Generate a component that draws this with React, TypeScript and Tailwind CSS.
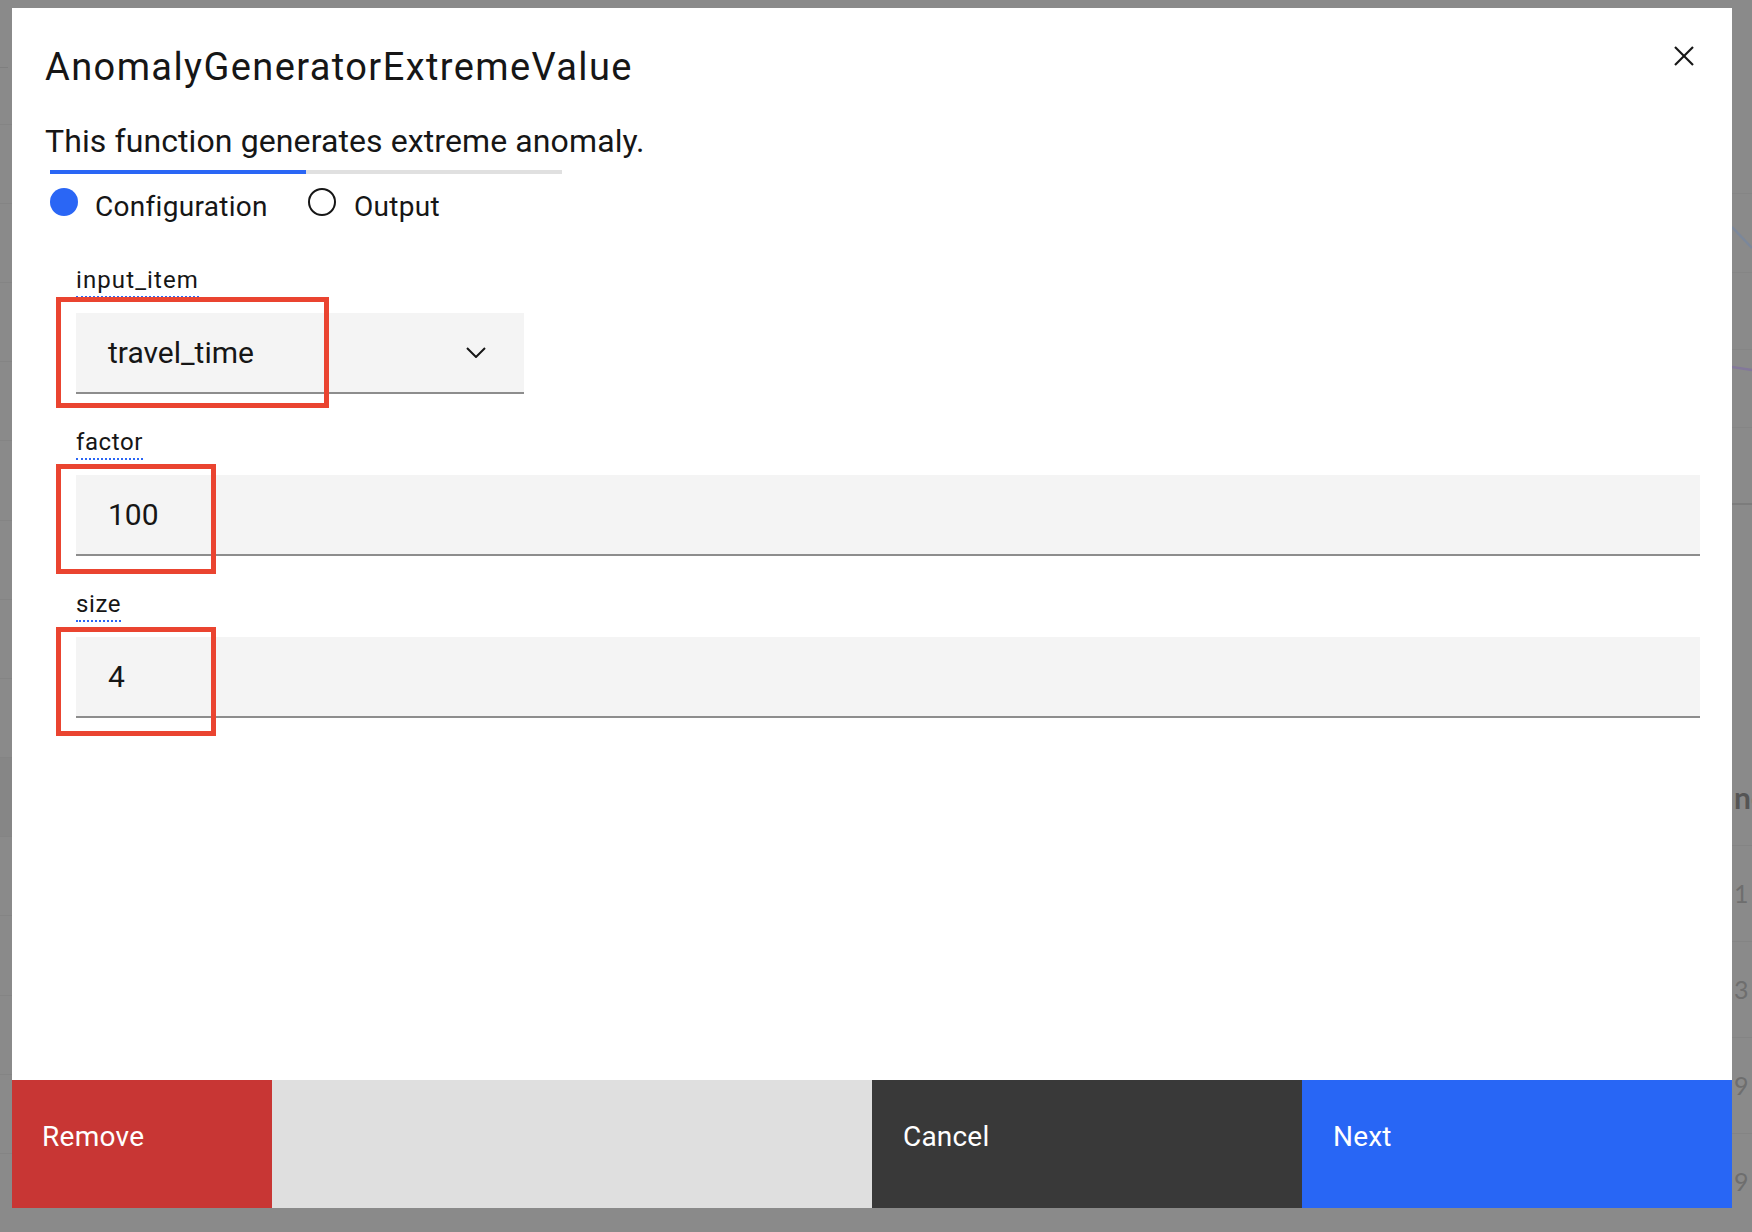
import React from "react";

function LeftStrip() {
  const rows = Array.from({ length: 14 });
  return (
    <div className="w-[12px] shrink-0 flex flex-col">
      <div className="h-[69px] border-b border-[#7f7f7f] w-[8px]" />
      <div className="h-[56px]" />
      {rows.map((_, i) => (
        <div
          key={i}
          className={
            i === 8
              ? "h-[80px] border-t border-[#848484] bg-[#868686]"
              : "h-[80px] border-t border-[#848484]"
          }
        />
      ))}
    </div>
  );
}

function RightStrip() {
  return (
    <div className="w-[20px] shrink-0 overflow-hidden flex flex-col font-['Lato',sans-serif]">
      <svg width="20" height="510" viewBox="0 0 20 510">
        <line x1="0" y1="193.5" x2="20" y2="193.5" stroke="#858585" strokeWidth="1" />
        <line x1="0" y1="272.5" x2="20" y2="272.5" stroke="#858585" strokeWidth="1" />
        <line x1="0" y1="349.5" x2="20" y2="349.5" stroke="#858585" strokeWidth="1" />
        <line x1="0" y1="427.5" x2="20" y2="427.5" stroke="#858585" strokeWidth="1" />
        <line x1="0" y1="504" x2="20" y2="504" stroke="#7c7c7c" strokeWidth="2" />
        <line x1="0" y1="227" x2="20" y2="248" stroke="#7b879a" strokeWidth="2.5" />
        <line x1="0" y1="367" x2="20" y2="370" stroke="#83789a" strokeWidth="2.5" />
      </svg>
      <div className="h-[250px]" />
      <div className="h-[85px] flex items-center pl-[2px] text-[30px] leading-[30px] font-bold text-[#555555] whitespace-nowrap -mt-[6px]">
        ne
      </div>
      <div className="h-[6px]" />
      {["1", "3", "9", "9"].map((d, i) => (
        <div
          key={i}
          className="h-[96px] border-t border-[#848484] flex items-center pl-[2px] text-[25px] leading-[25px] text-[#6e6e6e]"
        >
          {d}
        </div>
      ))}
    </div>
  );
}

function RedBox({ className }: { className: string }) {
  return (
    <div
      className={
        "absolute border-[5px] border-[#ea4430] pointer-events-none " + className
      }
    />
  );
}

function FieldLabel({
  children,
  wide,
}: {
  children: React.ReactNode;
  wide?: boolean;
}) {
  return (
    <div
      className={
        wide
          ? "self-start text-[24px] leading-[32px] tracking-[1.1px] text-[#161616] border-b-2 border-dotted border-[#2a66f5]"
          : "self-start text-[24px] leading-[32px] tracking-[0.6px] text-[#161616] border-b-2 border-dotted border-[#2a66f5]"
      }
    >
      {children}
    </div>
  );
}

export default function App() {
  return (
    <div className="w-[1752px] h-[1232px] bg-[#8a8a8a] flex overflow-hidden font-['Roboto',sans-serif]">
      <LeftStrip />
      <div className="w-[1720px] shrink-0 pt-[8px]">
        <div className="h-[1200px] bg-white flex flex-col">
          {/* header */}
          <div className="flex items-start justify-between pt-[36px] pl-[33px] pr-[38px]">
            <h1 className="text-[38px] leading-[46px] text-[#161616] font-normal tracking-[1.4px]">
              AnomalyGeneratorExtremeValue
            </h1>
            <button className="w-[20px] h-[20px] mt-[2px]" aria-label="close">
              <svg width="20" height="20" viewBox="0 0 20 20">
                <line x1="1" y1="1" x2="19" y2="19" stroke="#161616" strokeWidth="2.2" />
                <line x1="19" y1="1" x2="1" y2="19" stroke="#161616" strokeWidth="2.2" />
              </svg>
            </button>
          </div>

          <div className="pl-[33px] flex flex-col">
            <p className="mt-[31px] text-[32px] leading-[40px] tracking-[0.1px] text-[#161616]">
              This function generates extreme anomaly.
            </p>

            {/* progress */}
            <div className="mt-[9px] ml-[5px] w-[512px] h-[4px] bg-[#e0e0e0] flex">
              <div className="w-[256px] h-[4px] bg-[#2a66f5]" />
            </div>

            {/* radios */}
            <div className="mt-[12px] ml-[5px] flex items-start">
              <div className="w-[258px] flex items-start">
                <div className="mt-[2px] w-[28px] h-[28px] rounded-full bg-[#2a66f5]" />
                <span className="ml-[17px] mt-[5px] text-[28px] leading-[32px] tracking-[0.3px] text-[#161616]">
                  Configuration
                </span>
              </div>
              <div className="flex items-start">
                <div className="mt-[2px] w-[28px] h-[28px] rounded-full border-2 border-[#161616]" />
                <span className="ml-[18px] mt-[5px] text-[28px] leading-[32px] tracking-[0.3px] text-[#161616]">
                  Output
                </span>
              </div>
            </div>
          </div>

          {/* form */}
          <div className="mt-[41px] pl-[64px] pr-[32px] flex flex-col gap-[32px]">
            <div className="flex flex-col">
              <FieldLabel wide>input_item</FieldLabel>
              <div className="relative mt-[15px] w-[448px] h-[81px] bg-[#f4f4f4] border-b-2 border-[#8d8d8d] flex items-center justify-between pl-[32px] pr-[38px]">
                <span className="text-[30px] leading-[36px] text-[#161616]">travel_time</span>
                <svg width="20" height="11" viewBox="0 0 20 11">
                  <polyline points="1,1 10,10 19,1" fill="none" stroke="#161616" strokeWidth="2" />
                </svg>
                <RedBox className="left-[-20px] top-[-16px] w-[273px] h-[111px]" />
              </div>
            </div>

            <div className="flex flex-col">
              <FieldLabel>factor</FieldLabel>
              <div className="relative mt-[15px] h-[81px] bg-[#f4f4f4] border-b-2 border-[#8d8d8d] flex items-center pl-[32px]">
                <span className="text-[30px] leading-[36px] text-[#161616]">100</span>
                <RedBox className="left-[-20px] top-[-11px] w-[160px] h-[110px]" />
              </div>
            </div>

            <div className="flex flex-col">
              <FieldLabel>size</FieldLabel>
              <div className="relative mt-[15px] h-[81px] bg-[#f4f4f4] border-b-2 border-[#8d8d8d] flex items-center pl-[32px]">
                <span className="text-[30px] leading-[36px] text-[#161616]">4</span>
                <RedBox className="left-[-20px] top-[-10px] w-[160px] h-[109px]" />
              </div>
            </div>
          </div>

          {/* footer */}
          <div className="mt-auto h-[128px] flex">
            <button className="w-[260px] h-[128px] bg-[#c83634] text-white text-[28px] leading-[36px] tracking-[0.3px] text-left pl-[30px] pt-[39px] flex items-start">
              Remove
            </button>
            <div className="flex-1 bg-[#dfdfdf]" />
            <button className="w-[430px] h-[128px] bg-[#393939] text-white text-[28px] leading-[36px] tracking-[0.2px] text-left pl-[31px] pt-[39px] flex items-start">
              Cancel
            </button>
            <button className="w-[430px] h-[128px] bg-[#2866f5] text-white text-[28px] leading-[36px] tracking-[0.2px] text-left pl-[31px] pt-[39px] flex items-start">
              Next
            </button>
          </div>
        </div>
      </div>
      <RightStrip />
    </div>
  );
}
